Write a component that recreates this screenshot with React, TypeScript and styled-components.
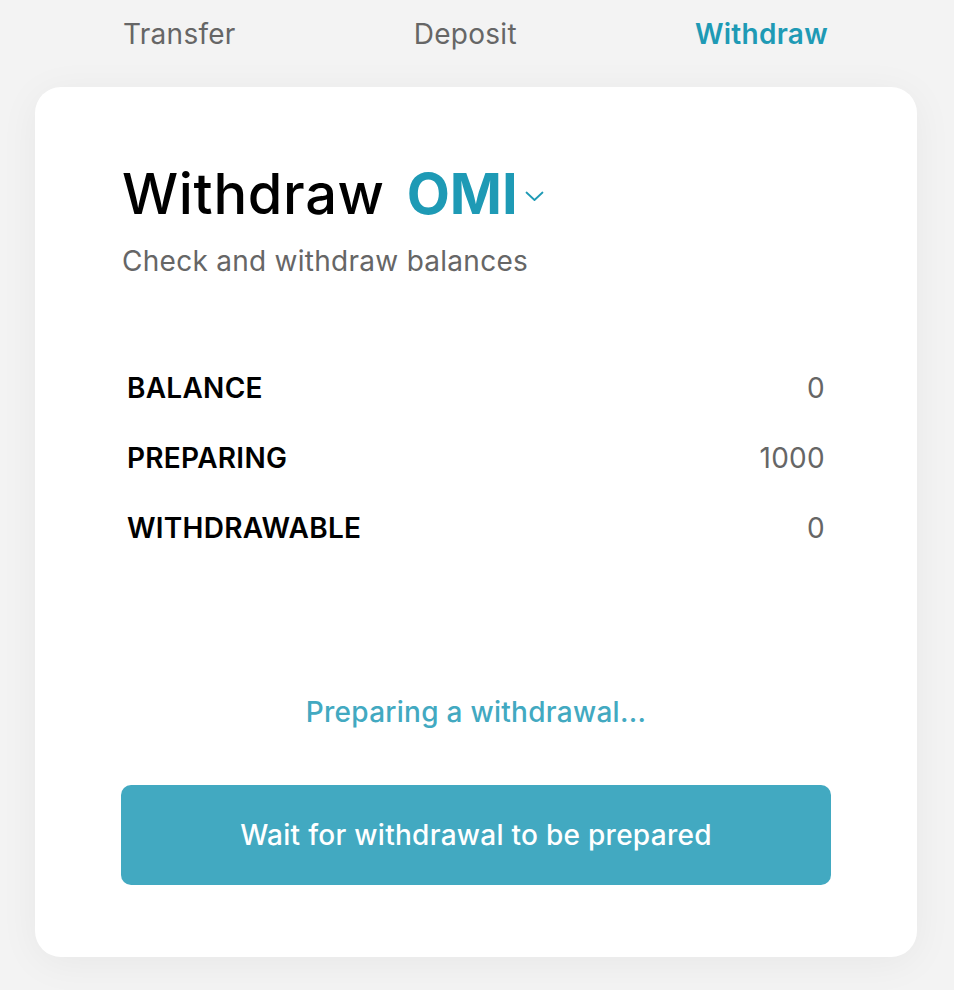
import { createGlobalStyle, styled } from 'styled-components';

const GlobalStyle = createGlobalStyle`
  html, body {
    margin: 0;
    padding: 0;
    background: #f3f3f3;
    font-family: Inter, "Noto Sans", sans-serif;
    letter-spacing: 0.017em;
  }
`;

const rows = [
  { label: 'BALANCE', value: '0' },
  { label: 'PREPARING', value: '1000' },
  { label: 'WITHDRAWABLE', value: '0' },
];

const tabs = ['Transfer', 'Deposit', 'Withdraw'];

const App = () => {
  return (
    <>
      <GlobalStyle />
      <Page>
        <Tabs>
          {tabs.map((t) => (
            <Tab key={t} $active={t === 'Withdraw'}>{t}</Tab>
          ))}
        </Tabs>
        <Card>
          <TitleRow>
            <Title>Withdraw</Title>
            <TokenSelect>
              <Token>OMI</Token>
              <svg width="19" height="11" viewBox="0 0 19 11" fill="none">
                <polyline points="1.5,1.5 9.5,9 17.5,1.5" stroke="#1e9ab5" strokeWidth="1.8" strokeLinecap="round" strokeLinejoin="round" />
              </svg>
            </TokenSelect>
          </TitleRow>
          <Subtitle>Check and withdraw balances</Subtitle>
          <Balances>
            {rows.map((r) => (
              <Row key={r.label}>
                <Label>{r.label}</Label>
                <Value>{r.value}</Value>
              </Row>
            ))}
          </Balances>
          <Status>Preparing a withdrawal...</Status>
          <ActionButton disabled>Wait for withdrawal to be prepared</ActionButton>
        </Card>
      </Page>
    </>
  );
};

export default App;

const Page = styled.div`
  width: 882px;
  margin-left: 35px;
  padding-bottom: 33px;
`;

const Tabs = styled.nav`
  display: flex;
  justify-content: space-between;
  padding: 17px 89px 0 88px;
`;

const Tab = styled.span<{ $active?: boolean }>`
  font-size: 28px;
  line-height: 34px;
  font-weight: ${(p) => (p.$active ? 600 : 400)};
  color: ${(p) => (p.$active ? '#1e9ab5' : '#666666')};
`;

const Card = styled.div`
  margin-top: 36px;
  background: #ffffff;
  border-radius: 26px;
  box-shadow: 0 6px 40px rgba(0, 0, 0, 0.05);
  padding: 73px 86px 72px 86px;
  display: flex;
  flex-direction: column;
`;

const TitleRow = styled.div`
  display: flex;
  align-items: center;
  gap: 22px;
  padding-left: 1px;
`;

const Title = styled.h1`
  margin: 0;
  font-size: 56px;
  line-height: 68px;
  font-weight: 550;
  letter-spacing: 0.012em;
  color: #000000;
`;

const TokenSelect = styled.div`
  display: flex;
  align-items: center;
  gap: 7px;
  svg {
    margin-top: 4px;
  }
`;

const Token = styled.span`
  font-size: 56px;
  line-height: 68px;
  font-weight: 700;
  letter-spacing: 0;
  color: #1e9ab5;
`;

const Subtitle = styled.p`
  margin: 16px 0 0 1px;
  font-size: 28px;
  line-height: 34px;
  color: #666666;
`;

const Balances = styled.div`
  margin-top: 93px;
  display: flex;
  flex-direction: column;
  gap: 36px;
  padding: 0 6px;
`;

const Row = styled.div`
  display: flex;
  justify-content: space-between;
  align-items: center;
  font-size: 28px;
  line-height: 34px;
`;

const Label = styled.span`
  font-weight: 600;
  color: #000000;
`;

const Value = styled.span`
  color: #666666;
`;

const Status = styled.div`
  margin-top: 150px;
  text-align: center;
  font-size: 28px;
  line-height: 34px;
  font-weight: 500;
  color: #42a9c1;
`;

const ActionButton = styled.button`
  margin-top: 56px;
  height: 100px;
  border: none;
  border-radius: 10px;
  background: #42a9c1;
  color: #ffffff;
  font-family: inherit;
  font-size: 28px;
  font-weight: 500;
  letter-spacing: inherit;
  cursor: default;
`;
